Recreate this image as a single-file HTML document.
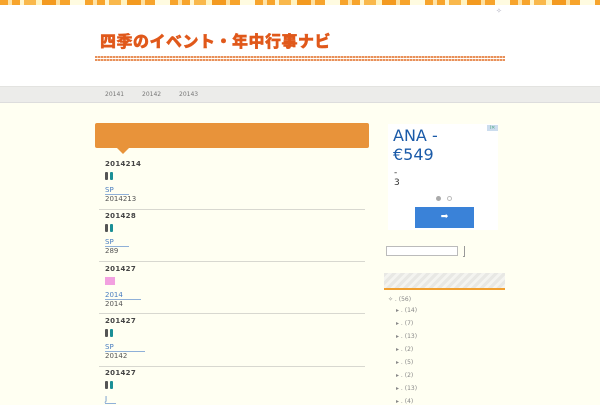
<!DOCTYPE html><html><head><meta charset="utf-8"><style>
*{margin:0;padding:0;box-sizing:border-box}
body{width:600px;height:400px;overflow:hidden;background:#fffff2;font-family:"DejaVu Sans","Liberation Sans",sans-serif;position:relative}
.top{position:absolute;left:0;top:0;width:600px;height:5px;background:repeating-linear-gradient(90deg,#f7a42c 0 8px,#fde3a8 8px 12px,#f7a42c 12px 20px,#fff6cf 20px 24px,#f9b84c 24px 36px,#fff3c0 36px 42px,#f39a20 42px 56px,#fde0a0 56px 60px,#f7a42c 60px 70px,#fffbe0 70px 85px)}
.hdr{position:absolute;left:0;top:5px;width:600px;height:81px;background:#fff}
.title{position:absolute;left:100px;top:28px;font:900 16px "Noto Sans CJK JP",sans-serif;color:#e0581a;letter-spacing:.5px;-webkit-text-stroke:.4px #e0581a}
.dl{position:absolute;left:95px;height:2px;width:345px;background:repeating-linear-gradient(90deg,#e8905a 0 2px,#f5c8a8 2px 3px)}
.nav{position:absolute;left:0;top:86px;width:600px;height:17px;background:#ececea;border-bottom:1px solid #ddd;border-top:1px solid #e3e3e0}
.nav span{position:absolute;top:4px;font-size:6px;color:#777}
.ob{position:absolute;left:95px;top:123px;width:274px;height:25px;background:#e8933a;border-radius:2px}
.tri{position:absolute;left:117px;top:148px;border-left:6px solid transparent;border-right:6px solid transparent;border-top:6px solid #e8933a}
.e{position:absolute;left:105px;width:264px;line-height:8px}
.e b{display:block;font-size:7px;color:#444;letter-spacing:.3px;height:8px}
.ic{margin-top:4px;height:8px}
.ic i{display:inline-block;width:3px;height:8px;border-radius:1px;margin-right:2px;background:#555;vertical-align:top}
.ic i+i{background:#1b8f96}
.pk{display:inline-block;width:10px;height:8px;background:#f2a0e0;vertical-align:top}
.lk{margin-top:6px;font-size:7px;color:#4a7ec0;border-bottom:1px solid #8fb0d8;display:inline-block;line-height:8px;height:9px;vertical-align:top}
.tx{font-size:7px;color:#555;margin-top:0px;height:9px}
.hr{position:absolute;left:99px;width:266px;height:1px;background:#d8d8d0}
.ad{position:absolute;left:388px;top:124px;width:110px;height:106px;background:#fff}
.side{position:absolute;left:384px;top:273px;width:121px;height:17px;background:repeating-linear-gradient(135deg,#e8e8e4 0 3px,#f4f4f0 3px 6px);border-bottom:2px solid #f0a030}
.li{position:absolute;font-size:6px;color:#888}
</style></head><body>
<div class="top"></div>
<div class="hdr"><div style="position:absolute;left:496px;top:2px;font-size:7px;color:#aab">✧</div></div>
<div class="title">四季のイベント・年中行事ナビ</div>
<div class="dl" style="top:56px;left:95px;width:410px"></div>
<div class="dl" style="top:59px;left:95px;width:410px"></div>
<div class="nav"><span style="left:105px">20141</span><span style="left:142px">20142</span><span style="left:179px">20143</span></div>
<div class="ob"></div><div class="tri"></div>
<div class="e" style="top:160px"><b>2014214</b><div class="ic"><i></i><i></i></div><div class="lk">SP&nbsp;&nbsp;&nbsp;&nbsp;&nbsp;&nbsp;&nbsp;</div><div class="tx">2014213</div></div>
<div class="hr" style="top:209px"></div>
<div class="e" style="top:212px"><b>201428</b><div class="ic"><i></i><i></i></div><div class="lk">SP&nbsp;&nbsp;&nbsp;&nbsp;&nbsp;&nbsp;&nbsp;</div><div class="tx">289</div></div>
<div class="hr" style="top:261px"></div>
<div class="e" style="top:265px"><b>201427</b><div class="ic"><span class="pk"></span></div><div class="lk">2014&nbsp;&nbsp;&nbsp;&nbsp;&nbsp;&nbsp;&nbsp;&nbsp;</div><div class="tx">2014</div></div>
<div class="hr" style="top:313px"></div>
<div class="e" style="top:317px"><b>201427</b><div class="ic"><i></i><i></i></div><div class="lk">SP&nbsp;&nbsp;&nbsp;&nbsp;&nbsp;&nbsp;&nbsp;&nbsp;&nbsp;&nbsp;&nbsp;&nbsp;&nbsp;&nbsp;</div><div class="tx">20142</div></div>
<div class="hr" style="top:366px"></div>
<div class="e" style="top:369px"><b>201427</b><div class="ic"><i></i><i></i></div><div class="lk">J&nbsp;&nbsp;&nbsp;&nbsp;</div></div>
<div class="ad">
<div style="position:absolute;right:0;top:1px;width:11px;height:6px;background:#cde;font-size:5px;color:#5a8;text-align:center">i✕</div>
<div style="position:absolute;left:5px;top:2px;font:16px 'DejaVu Sans',sans-serif;color:#1a5aa8;line-height:19px">ANA -<br>€549</div>
<div style="position:absolute;left:6px;top:44px;font-size:9px;color:#333;line-height:10px">-<br>3</div>
<div style="position:absolute;left:48px;top:72px;width:5px;height:5px;border-radius:50%;background:#aaa"></div>
<div style="position:absolute;left:59px;top:72px;width:5px;height:5px;border-radius:50%;border:1px solid #bbb"></div>
<div style="position:absolute;left:27px;top:83px;width:59px;height:21px;background:#3a82d8;color:#fff;font-size:9px;text-align:center;line-height:21px">➡</div>
</div>
<div style="position:absolute;left:386px;top:246px;width:72px;height:10px;border:1px solid #bbb;background:#fff"></div>
<div style="position:absolute;left:463px;top:246px;width:2px;height:11px;border-right:1px solid #999;border-bottom:1px solid #999"></div>
<div class="side"></div>
<div class="li" style="left:388px;top:296px">✧ . (56)</div>
<div class="li" style="left:396px;top:307px">▸ . (14)</div>
<div class="li" style="left:396px;top:320px">▸ . (7)</div>
<div class="li" style="left:396px;top:333px">▸ . (13)</div>
<div class="li" style="left:396px;top:346px">▸ . (2)</div>
<div class="li" style="left:396px;top:359px">▸ . (5)</div>
<div class="li" style="left:396px;top:372px">▸ . (2)</div>
<div class="li" style="left:396px;top:385px">▸ . (13)</div>
<div class="li" style="left:396px;top:398px">▸ . (4)</div>
</body></html>
